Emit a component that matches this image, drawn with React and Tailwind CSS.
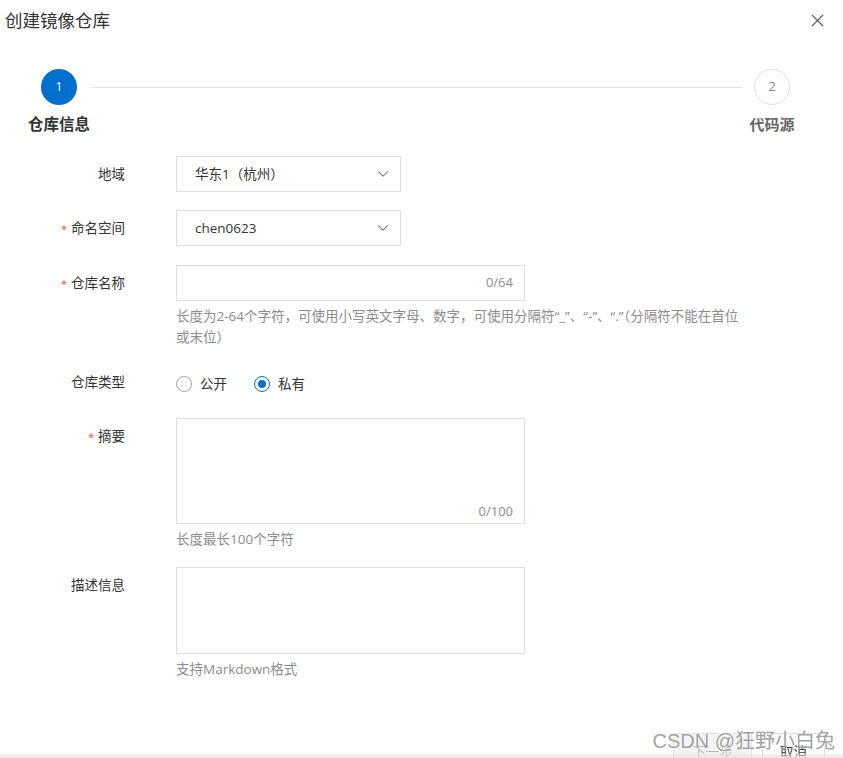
import { X, ChevronDown } from 'lucide-react';

const font = "font-['Open_Sans','Noto_Sans_CJK_SC',sans-serif]";

const Label = ({ required, children }) => (
  <div className="w-[125px] shrink-0 text-right text-[13.5px] leading-[36px] text-[#333]">
    {required && <span className="mr-[4px] text-[11px] text-[#e8503f]">*</span>}
    {children}
  </div>
);

const Select = ({ value }) => (
  <div className="flex h-[36px] w-[225px] items-center justify-between border border-[#dedede] pl-[18px] pr-[8px] text-[13.5px] text-[#333]">
    <span>{value}</span>
    <ChevronDown size={18} strokeWidth={1.4} className="text-[#666]" />
  </div>
);

const Help = ({ children, className = '' }) => (
  <p className={`mt-[5px] text-[13.5px] leading-[21px] text-[#8c8c8c] ${className}`}>{children}</p>
);

const Radio = ({ checked, label }) => (
  <label className="flex items-center gap-[8px] text-[13.5px] text-[#333]">
    {checked ? (
      <span className="flex h-[16px] w-[16px] items-center justify-center rounded-full border-[1.5px] border-[#0070cc]">
        <span className="h-[8px] w-[8px] rounded-full bg-[#0070cc]" />
      </span>
    ) : (
      <span className="h-[16px] w-[16px] rounded-full border border-[#a6a6a6]" />
    )}
    {label}
  </label>
);

export default function App() {
  return (
    <div className={`relative h-[758px] w-[843px] overflow-hidden bg-white ${font}`}>
      {/* header */}
      <div className="flex items-center justify-between pl-[5px] pr-[15px] pt-[8px]">
        <h1 className="text-[17.5px] leading-[24px] text-[#333]">创建镜像仓库</h1>
        <X size={21} strokeWidth={1.5} className="text-[#666]" />
      </div>

      {/* steps */}
      <div className="mt-[37px] flex items-start">
        <div className="ml-[27px] flex w-[64px] flex-col items-center">
          <div className="flex h-[36px] w-[36px] items-center justify-center rounded-full bg-[#0070cc] text-[13px] text-white">1</div>
          <div className="mt-[9px] text-[15.5px] font-bold leading-[20px] text-[#333]">仓库信息</div>
        </div>
        <div className="mr-[6px] mt-[18px] h-px flex-1 bg-[#e3e3e3]" />
        <div className="mr-[47px] flex w-[48px] flex-col items-center">
          <div className="flex h-[36px] w-[36px] items-center justify-center rounded-full border border-[#dedede] text-[13px] text-[#888]">2</div>
          <div className="mt-[9px] text-[15px] font-bold leading-[20px] text-[#666]">代码源</div>
        </div>
      </div>

      {/* form */}
      <div className="mt-[22px] flex flex-col">
        <div className="flex gap-[51px]">
          <Label>地域</Label>
          <Select value="华东1（杭州）" />
        </div>

        <div className="mt-[18px] flex gap-[51px]">
          <Label required>命名空间</Label>
          <Select value="chen0623" />
        </div>

        <div className="mt-[18px] flex gap-[51px]">
          <Label required>仓库名称</Label>
          <div className="w-[570px]">
            <div className="flex h-[36px] w-[349px] items-center justify-end border border-[#dedede] pr-[11px] text-[13px] text-[#8c8c8c]">0/64</div>
            <Help>长度为2-64个字符，可使用小写英文字母、数字，可使用分隔符“_”、“-”、“.”（分隔符不能在首位或末位）</Help>
          </div>
        </div>

        <div className="mt-[16px] flex gap-[51px]">
          <Label>仓库类型</Label>
          <div className="flex h-[36px] items-center gap-[27px] pt-[4px]">
            <Radio label="公开" />
            <Radio checked label="私有" />
          </div>
        </div>

        <div className="mt-[18px] flex gap-[51px]">
          <Label required>摘要</Label>
          <div>
            <div className="flex h-[106px] w-[349px] items-end justify-end border border-[#dedede] pb-[2px] pr-[11px] text-[13px] text-[#8c8c8c]">0/100</div>
            <Help>长度最长100个字符</Help>
          </div>
        </div>

        <div className="mt-[17px] flex gap-[51px]">
          <Label>描述信息</Label>
          <div>
            <div className="h-[87px] w-[349px] border border-[#dedede]" />
            <Help>支持Markdown格式</Help>
          </div>
        </div>
      </div>

      {/* footer */}
      <div className="mt-[53px] flex justify-end gap-[10px] pr-[18px]">
        <button className="h-[38px] w-[79px] border border-[#e0e0e0] bg-[#f4f4f4] text-[13.5px] text-[#bbb]">下一步</button>
        <button className="h-[38px] w-[63px] border border-[#dedede] bg-white text-[13.5px] text-[#333]">取消</button>
      </div>

      <div className="absolute bottom-0 left-0 h-[6px] w-full bg-gradient-to-b from-transparent to-[#e6e6e6]" />
      <span className="absolute bottom-[5px] right-[8px] font-['Liberation_Sans','Noto_Sans_CJK_SC',sans-serif] text-[20px] leading-[24px] text-[#8a8a8a]/80 [text-shadow:0_0_2px_#fff]">
        CSDN @狂野小白兔
      </span>
    </div>
  );
}
